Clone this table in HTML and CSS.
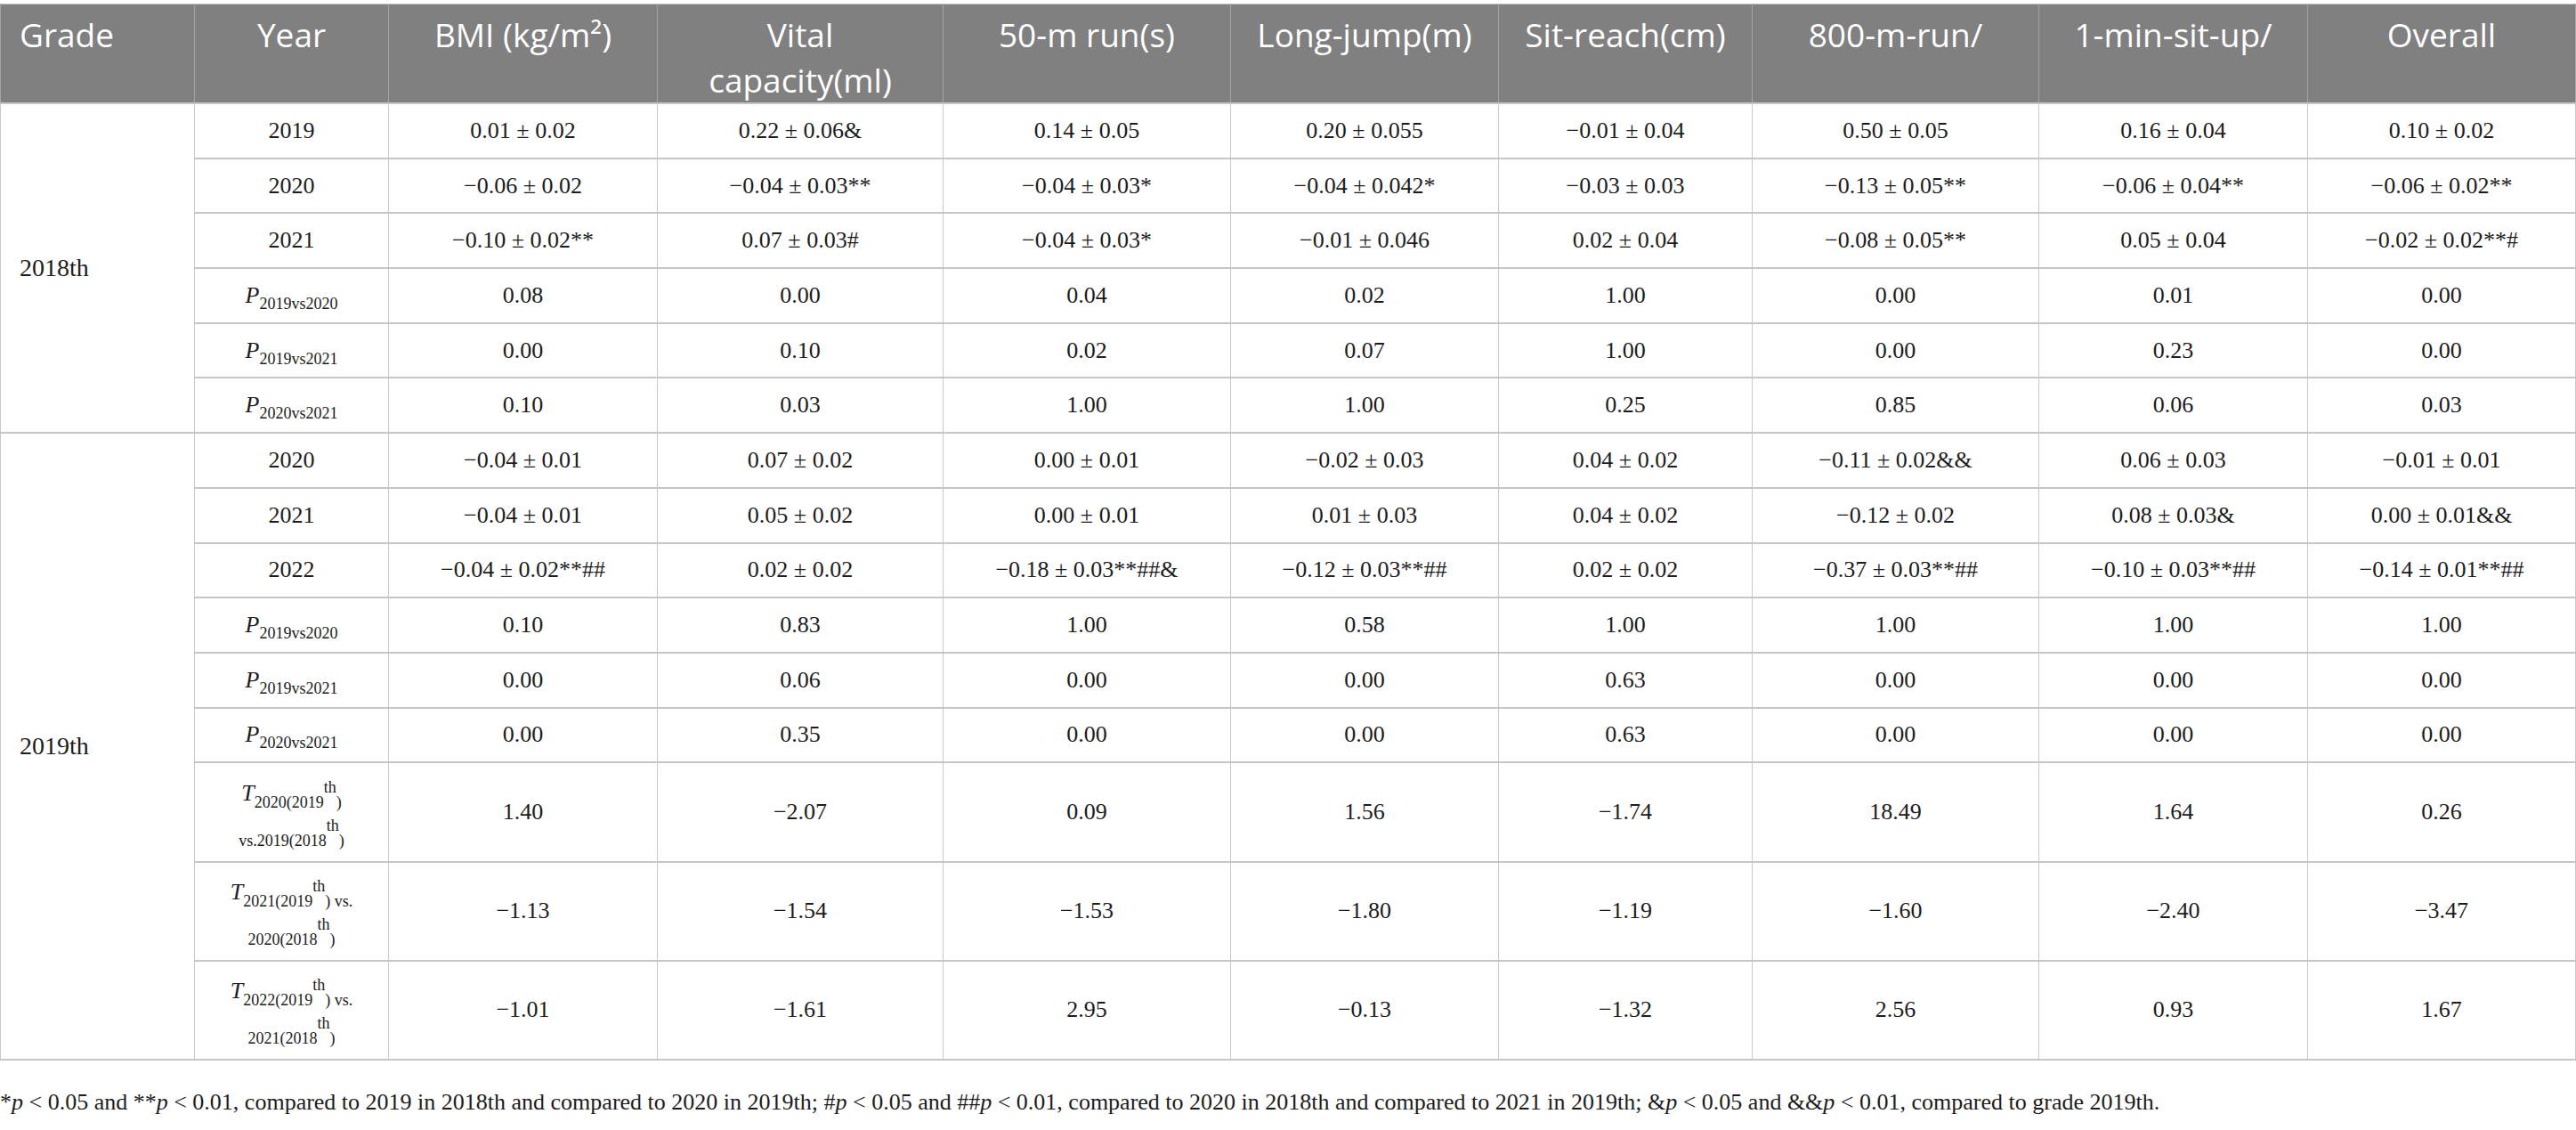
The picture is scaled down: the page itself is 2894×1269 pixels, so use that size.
FILE: index.html
```html
<!DOCTYPE html>
<html>
<head>
    <link rel="stylesheet" href="styles.css">
</head>

<body>
    <div id="page">
        <table class="stats">
            <colgroup>
                <col class="w218"><col class="w218"><col class="w302"><col class="w321"><col class="w323">
                <col class="w301"><col class="w285"><col class="w322"><col class="w302"><col class="w301">
            </colgroup>
            <thead>
                <tr>
                    <th class="left">Grade</th>
                    <th>Year</th>
                    <th>BMI (kg/m²)</th>
                    <th>Vital<br>capacity(ml)</th>
                    <th>50-m run(s)</th>
                    <th>Long-jump(m)</th>
                    <th>Sit-reach(cm)</th>
                    <th>800-m-run/</th>
                    <th>1-min-sit-up/</th>
                    <th>Overall</th>
                </tr>
            </thead>
            <tbody class="group">
                <tr class="row">
                    <td class="grade" rowspan="6">2018th</td>
                    <td>2019</td>
                    <td>0.01 ± 0.02</td><td>0.22 ± 0.06&amp;</td><td>0.14 ± 0.05</td><td>0.20 ± 0.055</td>
                    <td>−0.01 ± 0.04</td><td>0.50 ± 0.05</td><td>0.16 ± 0.04</td><td>0.10 ± 0.02</td>
                </tr>
                <tr class="row">
                    <td>2020</td>
                    <td>−0.06 ± 0.02</td><td>−0.04 ± 0.03**</td><td>−0.04 ± 0.03*</td><td>−0.04 ± 0.042*</td>
                    <td>−0.03 ± 0.03</td><td>−0.13 ± 0.05**</td><td>−0.06 ± 0.04**</td><td>−0.06 ± 0.02**</td>
                </tr>
                <tr class="row">
                    <td>2021</td>
                    <td>−0.10 ± 0.02**</td><td>0.07 ± 0.03#</td><td>−0.04 ± 0.03*</td><td>−0.01 ± 0.046</td>
                    <td>0.02 ± 0.04</td><td>−0.08 ± 0.05**</td><td>0.05 ± 0.04</td><td>−0.02 ± 0.02**#</td>
                </tr>
                <tr class="row">
                    <td><i>P</i><span class="sub">2019vs2020</span></td>
                    <td>0.08</td><td>0.00</td><td>0.04</td><td>0.02</td><td>1.00</td><td>0.00</td><td>0.01</td><td>0.00</td>
                </tr>
                <tr class="row">
                    <td><i>P</i><span class="sub">2019vs2021</span></td>
                    <td>0.00</td><td>0.10</td><td>0.02</td><td>0.07</td><td>1.00</td><td>0.00</td><td>0.23</td><td>0.00</td>
                </tr>
                <tr class="row">
                    <td><i>P</i><span class="sub">2020vs2021</span></td>
                    <td>0.10</td><td>0.03</td><td>1.00</td><td>1.00</td><td>0.25</td><td>0.85</td><td>0.06</td><td>0.03</td>
                </tr>
            </tbody>
            <tbody class="group">
                <tr class="row">
                    <td class="grade" rowspan="9">2019th</td>
                    <td>2020</td>
                    <td>−0.04 ± 0.01</td><td>0.07 ± 0.02</td><td>0.00 ± 0.01</td><td>−0.02 ± 0.03</td>
                    <td>0.04 ± 0.02</td><td>−0.11 ± 0.02&amp;&amp;</td><td>0.06 ± 0.03</td><td>−0.01 ± 0.01</td>
                </tr>
                <tr class="row">
                    <td>2021</td>
                    <td>−0.04 ± 0.01</td><td>0.05 ± 0.02</td><td>0.00 ± 0.01</td><td>0.01 ± 0.03</td>
                    <td>0.04 ± 0.02</td><td>−0.12 ± 0.02</td><td>0.08 ± 0.03&amp;</td><td>0.00 ± 0.01&amp;&amp;</td>
                </tr>
                <tr class="row">
                    <td>2022</td>
                    <td>−0.04 ± 0.02**##</td><td>0.02 ± 0.02</td><td>−0.18 ± 0.03**##&amp;</td><td>−0.12 ± 0.03**##</td>
                    <td>0.02 ± 0.02</td><td>−0.37 ± 0.03**##</td><td>−0.10 ± 0.03**##</td><td>−0.14 ± 0.01**##</td>
                </tr>
                <tr class="row">
                    <td><i>P</i><span class="sub">2019vs2020</span></td>
                    <td>0.10</td><td>0.83</td><td>1.00</td><td>0.58</td><td>1.00</td><td>1.00</td><td>1.00</td><td>1.00</td>
                </tr>
                <tr class="row">
                    <td><i>P</i><span class="sub">2019vs2021</span></td>
                    <td>0.00</td><td>0.06</td><td>0.00</td><td>0.00</td><td>0.63</td><td>0.00</td><td>0.00</td><td>0.00</td>
                </tr>
                <tr class="row">
                    <td><i>P</i><span class="sub">2020vs2021</span></td>
                    <td>0.00</td><td>0.35</td><td>0.00</td><td>0.00</td><td>0.63</td><td>0.00</td><td>0.00</td><td>0.00</td>
                </tr>
                <tr class="row tall">
                    <td class="tstat">
                        <div class="tl"><i>T</i><span class="sub">2020(2019<span class="sup">th</span>)</span></div>
                        <div class="tl"><span class="sub">vs.2019(2018<span class="sup">th</span>)</span></div>
                    </td>
                    <td>1.40</td><td>−2.07</td><td>0.09</td><td>1.56</td><td>−1.74</td><td>18.49</td><td>1.64</td><td>0.26</td>
                </tr>
                <tr class="row tall">
                    <td class="tstat">
                        <div class="tl"><i>T</i><span class="sub">2021(2019<span class="sup">th</span>) vs.</span></div>
                        <div class="tl"><span class="sub">2020(2018<span class="sup">th</span>)</span></div>
                    </td>
                    <td>−1.13</td><td>−1.54</td><td>−1.53</td><td>−1.80</td><td>−1.19</td><td>−1.60</td><td>−2.40</td><td>−3.47</td>
                </tr>
                <tr class="row tall">
                    <td class="tstat">
                        <div class="tl"><i>T</i><span class="sub">2022(2019<span class="sup">th</span>) vs.</span></div>
                        <div class="tl"><span class="sub">2021(2018<span class="sup">th</span>)</span></div>
                    </td>
                    <td>−1.01</td><td>−1.61</td><td>2.95</td><td>−0.13</td><td>−1.32</td><td>2.56</td><td>0.93</td><td>1.67</td>
                </tr>
            </tbody>
        </table>

        <p class="note">*<i>p</i> &lt; 0.05 and **<i>p</i> &lt; 0.01, compared to 2019 in 2018th and compared to 2020 in 2019th; #<i>p</i> &lt; 0.05 and ##<i>p</i> &lt; 0.01, compared to 2020 in 2018th and compared to 2021 in 2019th; &amp;<i>p</i> &lt; 0.05 and &amp;&amp;<i>p</i> &lt; 0.01, compared to grade 2019th.</p>
    </div>
</body>

</html>
```

FILE: styles.css
```css
/* General */
body, html {
    margin: 0;
    padding: 0;
    background: #ffffff;
}
#page {
    padding-top: 4px;
    color: #1c1c1c;
    font-family: "Liberation Serif", "Times New Roman", serif;
}

/* Columns */
.w218 { width: 218px; }
.w285 { width: 285px; }
.w301 { width: 301px; }
.w302 { width: 302px; }
.w321 { width: 321px; }
.w322 { width: 322px; }
.w323 { width: 323px; }

/* Table */
.stats {
    width: 2893px;
    table-layout: fixed;
    border-collapse: collapse;
    border-top: 1px solid #c8c8c8;
}
.stats th {
    background: #7f807f;
    color: #ffffff;
    font-family: "Open Sans", "Liberation Sans", sans-serif;
    font-weight: normal;
    font-size: 37px;
    line-height: 51px;
    height: 110px;
    padding: 8px 12px 0 12px;
    box-sizing: border-box;
    vertical-align: top;
    text-align: center;
    border-left: 1px solid #a4a4a4;
    border-right: 1px solid #a4a4a4;
}
.stats th.left { text-align: left; padding-left: 21px; }

.stats td {
    font-size: 26px;
    text-align: center;
    vertical-align: middle;
    padding: 0 8px;
    border-left: 1px solid #c9c9c9;
    border-right: 1px solid #c9c9c9;
    border-top: 2px solid #c6c6c6;
    border-bottom: 2px solid #c6c6c6;
    white-space: nowrap;
}
.row { height: 61.7px; }
.row.tall { height: 111.3px; }
.stats td.grade { text-align: left; padding-left: 21px; font-size: 28px; }

/* Sub and superscripts */
.sub { font-size: 18px; line-height: 0; vertical-align: -7px; }
.sup { line-height: 0; vertical-align: 17px; }

.tstat .tl { height: 43px; line-height: 43px; }
.tstat .sub { vertical-align: -8px; }

/* Footnote */
.note {
    margin: 32px 0 0 0;
    font-size: 26px;
    line-height: 30px;
    white-space: nowrap;
}
```
